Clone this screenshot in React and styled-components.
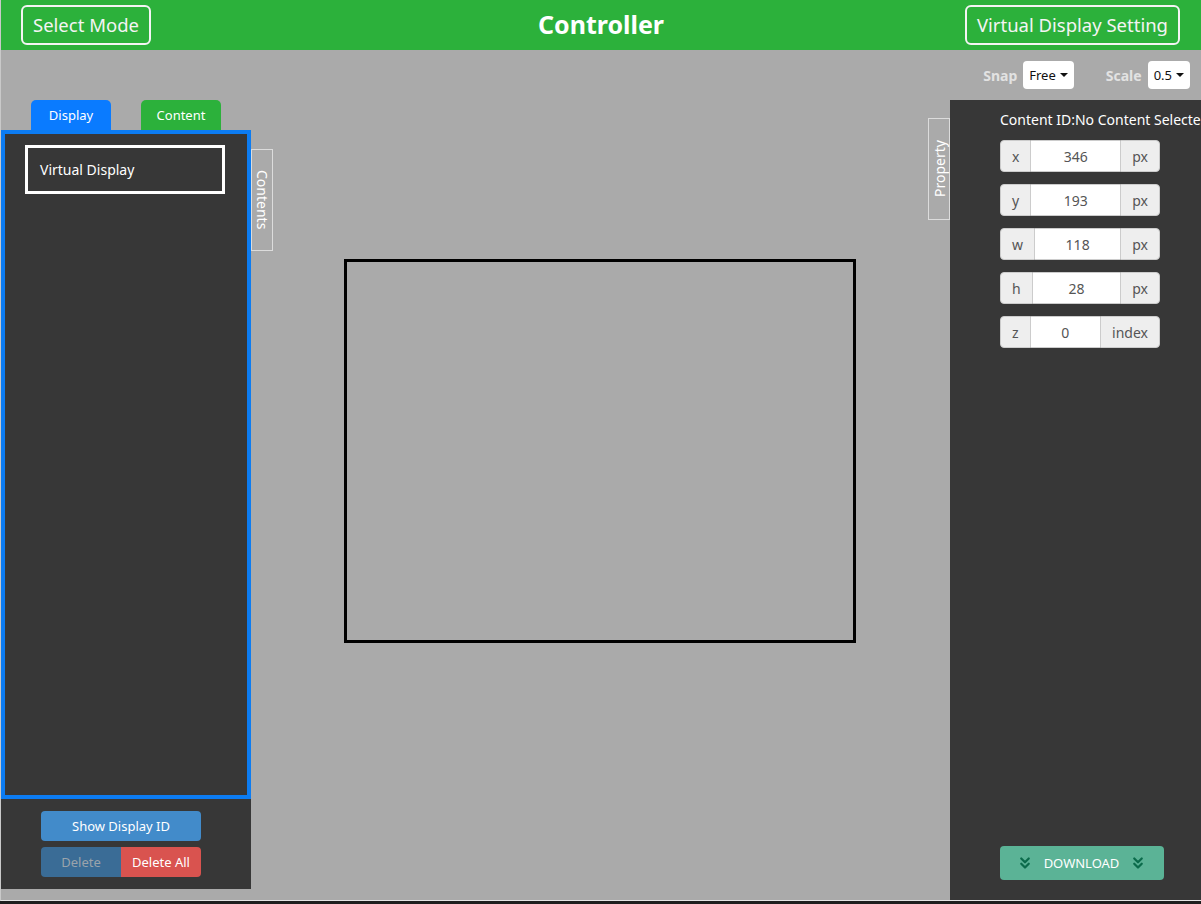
import React from 'react'
import styled, { createGlobalStyle } from 'styled-components'
import { ChevronsDown } from 'lucide-react'

const GlobalStyle = createGlobalStyle`
  html, body {
    margin: 0;
    padding: 0;
    background: #1e1e1e;
    font-family: "Noto Sans", "Open Sans", Arial, sans-serif;
  }
`

const fields = [
  { label: 'x', value: '346', unit: 'px' },
  { label: 'y', value: '193', unit: 'px' },
  { label: 'w', value: '118', unit: 'px' },
  { label: 'h', value: '28', unit: 'px' },
  { label: 'z', value: '0', unit: 'index' },
]

export default function App() {
  return (
    <>
      <GlobalStyle />
      <Page>
        <Header>
          <HeaderButton>Select Mode</HeaderButton>
          <Title>Controller</Title>
          <HeaderButton $right>Virtual Display Setting</HeaderButton>
        </Header>
        <Toolbar>
          <ToolLabel>Snap</ToolLabel>
          <Select>Free <Caret /></Select>
          <ToolLabel $gap>Scale</ToolLabel>
          <Select>0.5 <Caret /></Select>
        </Toolbar>
        <Main>
          <LeftColumn>
            <Tabs>
              <Tab $color="#0a7bff">Display</Tab>
              <Tab $color="#2cb13b">Content</Tab>
            </Tabs>
            <DisplayList>
              <DisplayItem>Virtual Display</DisplayItem>
            </DisplayList>
            <LeftFooter>
              <ActionButton $color="#428bca">Show Display ID</ActionButton>
              <ButtonPair>
                <ActionButton $color="#3a6c96" $muted $joined="left">Delete</ActionButton>
                <ActionButton $color="#d9534f" $joined="right">Delete All</ActionButton>
              </ButtonPair>
            </LeftFooter>
          </LeftColumn>
          <Center>
            <SideTab $top={49}>Contents</SideTab>
            <Stage>
              <VirtualScreen />
            </Stage>
            <SideTab $top={18} $flip>Property</SideTab>
          </Center>
          <RightPanel>
            <ContentId>Content ID:No Content Selected</ContentId>
            {fields.map((f) => (
              <InputGroup key={f.label}>
                <Addon $side="left">{f.label}</Addon>
                <Field>{f.value}</Field>
                <Addon $side="right">{f.unit}</Addon>
              </InputGroup>
            ))}
            <DownloadButton>
              <ChevronsDown size={18} strokeWidth={3} color="#0b6b4b" />
              <span>DOWNLOAD</span>
              <ChevronsDown size={18} strokeWidth={3} color="#0b6b4b" />
            </DownloadButton>
          </RightPanel>
        </Main>
      </Page>
    </>
  )
}

const Page = styled.div`
  display: flex;
  flex-direction: column;
  height: 900px;
  background: #aaaaaa;
  border-left: 1px solid #c9c9c9;
  border-bottom: 1px solid #e4e4e4;
  overflow: hidden;
`

const Header = styled.header`
  display: grid;
  grid-template-columns: 1fr auto 1fr;
  align-items: center;
  height: 50px;
  padding: 0 21px 0 20px;
  background: #2cb13b;
  box-sizing: border-box;
`

const HeaderButton = styled.div`
  justify-self: ${({ $right }) => ($right ? 'end' : 'start')};
  height: 40px;
  margin-top: -1px;
  padding: 0 10px;
  border: 2px solid #f4f4f4;
  border-radius: 6px;
  box-sizing: border-box;
  display: flex;
  align-items: center;
  color: #f4f4f4;
  font-size: 18.5px;
`

const Title = styled.h1`
  margin: 0 0 2px 1px;
  color: #ffffff;
  font-size: 25px;
  font-weight: 700;
`

const Toolbar = styled.div`
  display: flex;
  justify-content: flex-end;
  align-items: center;
  height: 50px;
  padding-right: 11px;
`

const ToolLabel = styled.span`
  color: #e2e2e2;
  font-size: 14px;
  font-weight: 700;
  margin-right: 6px;
  margin-left: ${({ $gap }) => ($gap ? '32px' : '0')};
`

const Select = styled.div`
  display: flex;
  align-items: center;
  gap: 4px;
  height: 28px;
  padding: 0 6px;
  background: #ffffff;
  border-radius: 4px;
  font-size: 13px;
  color: #111;
`

const Caret = styled.span`
  width: 0;
  height: 0;
  border-left: 4px solid transparent;
  border-right: 4px solid transparent;
  border-top: 4px solid #111;
`

const Main = styled.div`
  display: flex;
  flex: 1;
  min-height: 0;
`

const LeftColumn = styled.div`
  width: 250px;
  display: flex;
  flex-direction: column;
`

const Tabs = styled.div`
  display: flex;
  gap: 30px;
  padding-left: 30px;
  height: 30px;
`

const Tab = styled.div`
  width: 80px;
  display: flex;
  align-items: center;
  justify-content: center;
  background: ${({ $color }) => $color};
  border-radius: 5px 5px 0 0;
  color: #ffffff;
  font-size: 13px;
`

const DisplayList = styled.div`
  height: 669px;
  border: 4px solid #0c7cf2;
  background: #373737;
  box-sizing: border-box;
  padding: 11px 22px 0 20px;
`

const DisplayItem = styled.div`
  height: 49px;
  border: 3px solid #ffffff;
  box-sizing: border-box;
  display: flex;
  align-items: center;
  padding-left: 12px;
  color: #ffffff;
  font-size: 14px;
`

const LeftFooter = styled.div`
  height: 90px;
  background: #373737;
  display: flex;
  flex-direction: column;
  align-items: flex-start;
  gap: 6px;
  padding: 12px 0 0 40px;
  box-sizing: border-box;
`

const ButtonPair = styled.div`
  display: flex;
  width: 160px;
`

const ActionButton = styled.div`
  width: ${({ $joined }) => ($joined ? '50%' : '160px')};
  height: 30px;
  display: flex;
  align-items: center;
  justify-content: center;
  background: ${({ $color }) => $color};
  color: ${({ $muted }) => ($muted ? '#9aa3ab' : '#ffffff')};
  font-size: 13px;
  border-radius: ${({ $joined }) =>
    $joined === 'left' ? '4px 0 0 4px' : $joined === 'right' ? '0 4px 4px 0' : '4px'};
`

const Center = styled.div`
  flex: 1;
  display: flex;
  align-items: flex-start;
`

const SideTab = styled.div`
  margin-top: ${({ $top }) => $top}px;
  width: 22px;
  height: 102px;
  border: 1px solid #dcdcdc;
  box-sizing: border-box;
  display: flex;
  align-items: center;
  justify-content: center;
  writing-mode: vertical-rl;
  transform: ${({ $flip }) => ($flip ? 'rotate(180deg)' : 'none')};
  color: #ffffff;
  font-size: 14px;
`

const Stage = styled.div`
  flex: 1;
  display: flex;
  justify-content: center;
  padding: 159px 2px 0 0;
`

const VirtualScreen = styled.div`
  width: 512px;
  height: 384px;
  border: 3px solid #000000;
  box-sizing: border-box;
`

const RightPanel = styled.div`
  width: 251px;
  background: #373737;
  display: flex;
  flex-direction: column;
  align-items: flex-start;
  gap: 12px;
  padding: 10px 0 20px 50px;
  box-sizing: border-box;
  overflow: hidden;
`

const ContentId = styled.div`
  color: #ffffff;
  font-size: 14px;
  white-space: nowrap;
  margin-bottom: -1px;
`

const InputGroup = styled.div`
  display: flex;
  width: 160px;
  height: 32px;
  font-size: 14px;
  color: #555555;
`

const Addon = styled.div`
  display: flex;
  align-items: center;
  padding: 0 11px;
  background: #eeeeee;
  border: 1px solid #cccccc;
  border-radius: ${({ $side }) => ($side === 'left' ? '4px 0 0 4px' : '0 4px 4px 0')};
`

const Field = styled.div`
  flex: 1;
  display: flex;
  align-items: center;
  justify-content: center;
  background: #ffffff;
  border-top: 1px solid #cccccc;
  border-bottom: 1px solid #cccccc;
`

const DownloadButton = styled.div`
  margin-top: auto;
  width: 164px;
  height: 34px;
  display: flex;
  align-items: center;
  justify-content: space-between;
  padding: 0 17px 0 16px;
  box-sizing: border-box;
  background: #5bb396;
  border-radius: 4px;
  color: #ffffff;
  font-size: 13px;
`
